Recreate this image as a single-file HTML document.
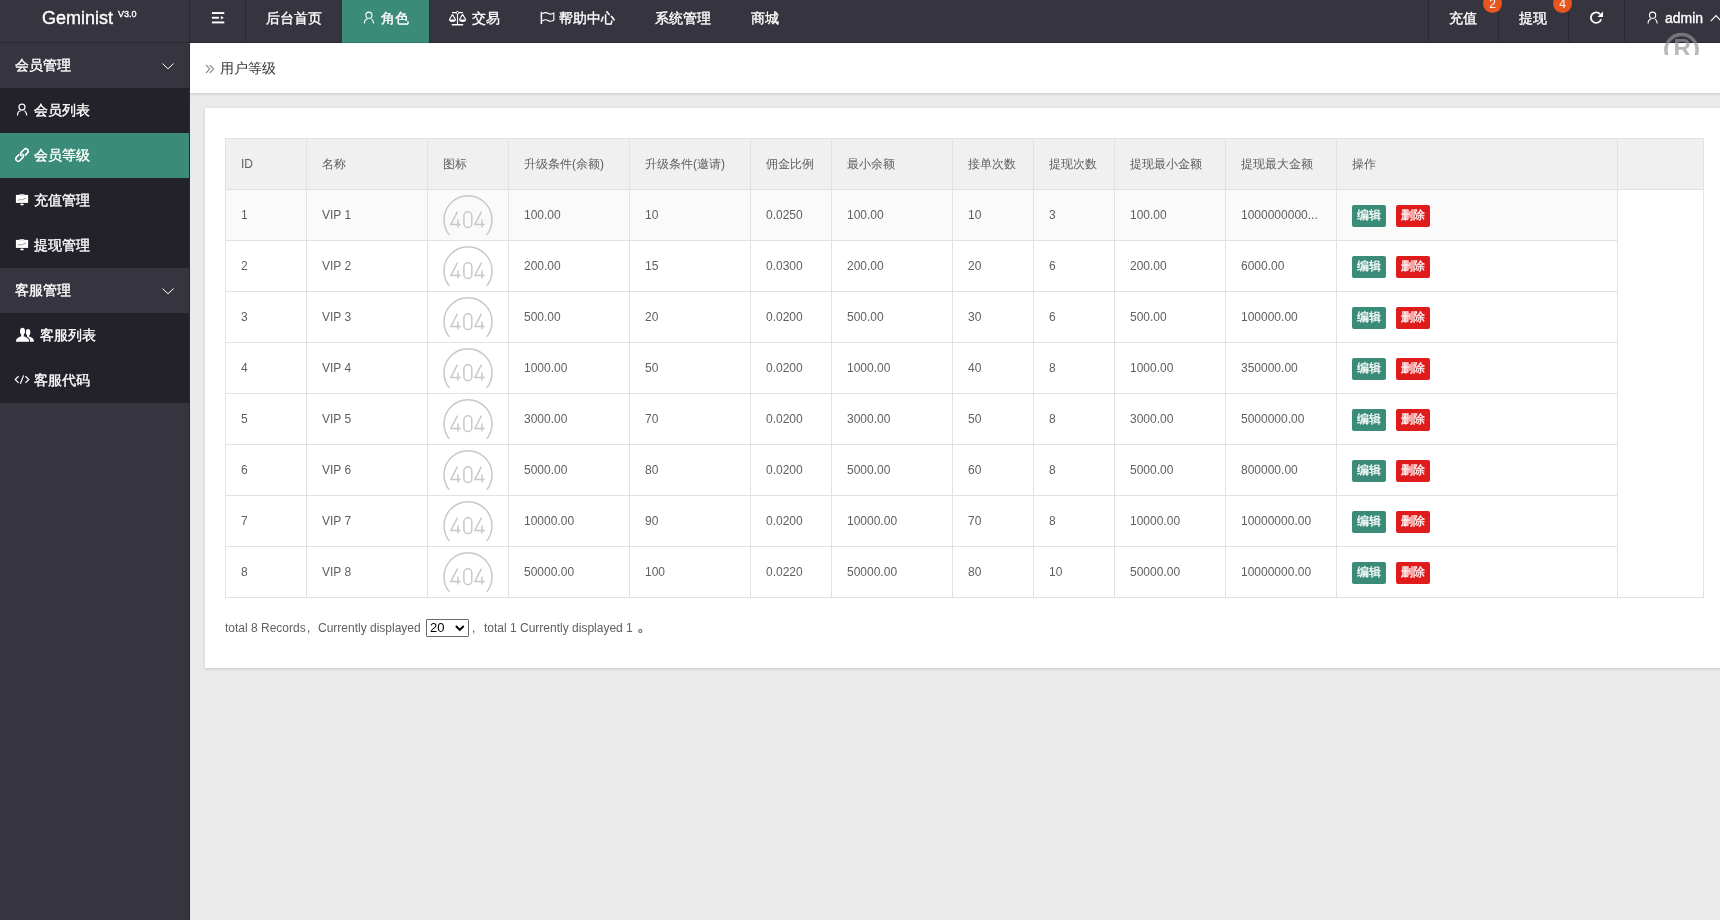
<!DOCTYPE html>
<html><head><meta charset="utf-8">
<style>
*{margin:0;padding:0;box-sizing:border-box}
html,body{width:1720px;height:920px;overflow:hidden;background:#eaeaea;font-family:"Liberation Sans",sans-serif;position:relative}
.t{position:absolute;white-space:nowrap}
body>div,body>svg{will-change:transform}
.r{position:absolute}
svg{position:absolute;overflow:visible}
</style></head><body>

<div class="r" style="left:190px;top:43px;width:1530px;height:50px;background:#fff;box-shadow:0 1px 3px rgba(0,0,0,.16)"></div>
<div class="r" style="left:205px;top:108px;width:1530px;height:560px;background:#fff;box-shadow:0 1px 3px rgba(0,0,0,.14)"></div>
<svg style="left:203px;top:62px" width="14" height="14" viewBox="203 62 14 14"><path d="M206 65.2 L209.8 69 L206 72.9 M209.8 65.2 L213.6 69 L209.8 72.9" fill="none" stroke="#7a7a7a" stroke-width="1.05"/></svg>
<div class="t" style="left:220px;top:60px;font-size:14px;line-height:16px;color:#333;">用户等级</div>
<div class="r" style="left:225px;top:138px;width:1479px;height:51px;background:#f0f0f0;"></div>
<div class="r" style="left:226px;top:190px;width:1391px;height:50px;background:#fafafa;"></div>
<div class="r" style="left:225px;top:138px;width:1479px;height:1px;background:#e2e2e2;"></div>
<div class="r" style="left:225px;top:189px;width:1479px;height:1px;background:#e2e2e2;"></div>
<div class="r" style="left:225px;top:240px;width:1393px;height:1px;background:#e2e2e2;"></div>
<div class="r" style="left:225px;top:291px;width:1393px;height:1px;background:#e2e2e2;"></div>
<div class="r" style="left:225px;top:342px;width:1393px;height:1px;background:#e2e2e2;"></div>
<div class="r" style="left:225px;top:393px;width:1393px;height:1px;background:#e2e2e2;"></div>
<div class="r" style="left:225px;top:444px;width:1393px;height:1px;background:#e2e2e2;"></div>
<div class="r" style="left:225px;top:495px;width:1393px;height:1px;background:#e2e2e2;"></div>
<div class="r" style="left:225px;top:546px;width:1393px;height:1px;background:#e2e2e2;"></div>
<div class="r" style="left:225px;top:597px;width:1393px;height:1px;background:#e2e2e2;"></div>
<div class="r" style="left:1617px;top:597px;width:87px;height:1px;background:#e2e2e2;"></div>
<div class="r" style="left:225px;top:138px;width:1px;height:460px;background:#e2e2e2;"></div>
<div class="r" style="left:306px;top:138px;width:1px;height:460px;background:#e2e2e2;"></div>
<div class="r" style="left:427px;top:138px;width:1px;height:460px;background:#e2e2e2;"></div>
<div class="r" style="left:508px;top:138px;width:1px;height:460px;background:#e2e2e2;"></div>
<div class="r" style="left:629px;top:138px;width:1px;height:460px;background:#e2e2e2;"></div>
<div class="r" style="left:750px;top:138px;width:1px;height:460px;background:#e2e2e2;"></div>
<div class="r" style="left:831px;top:138px;width:1px;height:460px;background:#e2e2e2;"></div>
<div class="r" style="left:952px;top:138px;width:1px;height:460px;background:#e2e2e2;"></div>
<div class="r" style="left:1033px;top:138px;width:1px;height:460px;background:#e2e2e2;"></div>
<div class="r" style="left:1114px;top:138px;width:1px;height:460px;background:#e2e2e2;"></div>
<div class="r" style="left:1225px;top:138px;width:1px;height:460px;background:#e2e2e2;"></div>
<div class="r" style="left:1336px;top:138px;width:1px;height:460px;background:#e2e2e2;"></div>
<div class="r" style="left:1617px;top:138px;width:1px;height:460px;background:#e2e2e2;"></div>
<div class="r" style="left:1703px;top:138px;width:1px;height:460px;background:#e2e2e2;"></div>
<div class="t" style="left:241px;top:157px;font-size:12px;line-height:14px;color:#606060;">ID</div>
<div class="t" style="left:322px;top:157px;font-size:12px;line-height:14px;color:#606060;">名称</div>
<div class="t" style="left:443px;top:157px;font-size:12px;line-height:14px;color:#606060;">图标</div>
<div class="t" style="left:524px;top:157px;font-size:12px;line-height:14px;color:#606060;">升级条件(余额)</div>
<div class="t" style="left:645px;top:157px;font-size:12px;line-height:14px;color:#606060;">升级条件(邀请)</div>
<div class="t" style="left:766px;top:157px;font-size:12px;line-height:14px;color:#606060;">佣金比例</div>
<div class="t" style="left:847px;top:157px;font-size:12px;line-height:14px;color:#606060;">最小余额</div>
<div class="t" style="left:968px;top:157px;font-size:12px;line-height:14px;color:#606060;">接单次数</div>
<div class="t" style="left:1049px;top:157px;font-size:12px;line-height:14px;color:#606060;">提现次数</div>
<div class="t" style="left:1130px;top:157px;font-size:12px;line-height:14px;color:#606060;">提现最小金额</div>
<div class="t" style="left:1241px;top:157px;font-size:12px;line-height:14px;color:#606060;">提现最大金额</div>
<div class="t" style="left:1352px;top:157px;font-size:12px;line-height:14px;color:#606060;">操作</div>
<div class="t" style="left:241px;top:208px;font-size:12px;line-height:14px;color:#606060;">1</div>
<div class="t" style="left:322px;top:208px;font-size:12px;line-height:14px;color:#606060;">VIP 1</div>
<svg style="left:428px;top:190px" width="80" height="50" viewBox="0 0 80 50">
<defs><clipPath id="c0"><rect x="0" y="0" width="80" height="44.7"/></clipPath></defs>
<g fill="none" stroke="#ccc7c7" stroke-width="1.5">
<circle cx="40" cy="29.8" r="24" clip-path="url(#c0)"/>
<path d="M29.5 21.6 L22.9 34.5 L32.8 34.5 M30 29.4 L30 37.6"/>
<rect x="35.9" y="21.8" width="7.9" height="15.8" rx="3.95"/>
<path d="M53.5 21.6 L46.9 34.5 L56.8 34.5 M54 29.4 L54 37.6"/>
</g></svg>
<div class="t" style="left:524px;top:208px;font-size:12px;line-height:14px;color:#606060;">100.00</div>
<div class="t" style="left:645px;top:208px;font-size:12px;line-height:14px;color:#606060;">10</div>
<div class="t" style="left:766px;top:208px;font-size:12px;line-height:14px;color:#606060;">0.0250</div>
<div class="t" style="left:847px;top:208px;font-size:12px;line-height:14px;color:#606060;">100.00</div>
<div class="t" style="left:968px;top:208px;font-size:12px;line-height:14px;color:#606060;">10</div>
<div class="t" style="left:1049px;top:208px;font-size:12px;line-height:14px;color:#606060;">3</div>
<div class="t" style="left:1130px;top:208px;font-size:12px;line-height:14px;color:#606060;">100.00</div>
<div class="t" style="left:1241px;top:208px;font-size:12px;line-height:14px;color:#606060;">1000000000...</div>
<div class="t" style="left:1352px;top:205px;width:34px;height:22px;background:#3a8b78;border-radius:2px;color:#fff;font-size:12px;line-height:20px;text-align:center;-webkit-text-stroke:0.3px #fff">编辑</div>
<div class="t" style="left:1396px;top:205px;width:34px;height:22px;background:#e01b1b;border-radius:2px;color:#fff;font-size:12px;line-height:20px;text-align:center;-webkit-text-stroke:0.3px #fff">删除</div>
<div class="t" style="left:241px;top:259px;font-size:12px;line-height:14px;color:#606060;">2</div>
<div class="t" style="left:322px;top:259px;font-size:12px;line-height:14px;color:#606060;">VIP 2</div>
<svg style="left:428px;top:241px" width="80" height="50" viewBox="0 0 80 50">
<defs><clipPath id="c1"><rect x="0" y="0" width="80" height="44.7"/></clipPath></defs>
<g fill="none" stroke="#ccc7c7" stroke-width="1.5">
<circle cx="40" cy="29.8" r="24" clip-path="url(#c1)"/>
<path d="M29.5 21.6 L22.9 34.5 L32.8 34.5 M30 29.4 L30 37.6"/>
<rect x="35.9" y="21.8" width="7.9" height="15.8" rx="3.95"/>
<path d="M53.5 21.6 L46.9 34.5 L56.8 34.5 M54 29.4 L54 37.6"/>
</g></svg>
<div class="t" style="left:524px;top:259px;font-size:12px;line-height:14px;color:#606060;">200.00</div>
<div class="t" style="left:645px;top:259px;font-size:12px;line-height:14px;color:#606060;">15</div>
<div class="t" style="left:766px;top:259px;font-size:12px;line-height:14px;color:#606060;">0.0300</div>
<div class="t" style="left:847px;top:259px;font-size:12px;line-height:14px;color:#606060;">200.00</div>
<div class="t" style="left:968px;top:259px;font-size:12px;line-height:14px;color:#606060;">20</div>
<div class="t" style="left:1049px;top:259px;font-size:12px;line-height:14px;color:#606060;">6</div>
<div class="t" style="left:1130px;top:259px;font-size:12px;line-height:14px;color:#606060;">200.00</div>
<div class="t" style="left:1241px;top:259px;font-size:12px;line-height:14px;color:#606060;">6000.00</div>
<div class="t" style="left:1352px;top:256px;width:34px;height:22px;background:#3a8b78;border-radius:2px;color:#fff;font-size:12px;line-height:20px;text-align:center;-webkit-text-stroke:0.3px #fff">编辑</div>
<div class="t" style="left:1396px;top:256px;width:34px;height:22px;background:#e01b1b;border-radius:2px;color:#fff;font-size:12px;line-height:20px;text-align:center;-webkit-text-stroke:0.3px #fff">删除</div>
<div class="t" style="left:241px;top:310px;font-size:12px;line-height:14px;color:#606060;">3</div>
<div class="t" style="left:322px;top:310px;font-size:12px;line-height:14px;color:#606060;">VIP 3</div>
<svg style="left:428px;top:292px" width="80" height="50" viewBox="0 0 80 50">
<defs><clipPath id="c2"><rect x="0" y="0" width="80" height="44.7"/></clipPath></defs>
<g fill="none" stroke="#ccc7c7" stroke-width="1.5">
<circle cx="40" cy="29.8" r="24" clip-path="url(#c2)"/>
<path d="M29.5 21.6 L22.9 34.5 L32.8 34.5 M30 29.4 L30 37.6"/>
<rect x="35.9" y="21.8" width="7.9" height="15.8" rx="3.95"/>
<path d="M53.5 21.6 L46.9 34.5 L56.8 34.5 M54 29.4 L54 37.6"/>
</g></svg>
<div class="t" style="left:524px;top:310px;font-size:12px;line-height:14px;color:#606060;">500.00</div>
<div class="t" style="left:645px;top:310px;font-size:12px;line-height:14px;color:#606060;">20</div>
<div class="t" style="left:766px;top:310px;font-size:12px;line-height:14px;color:#606060;">0.0200</div>
<div class="t" style="left:847px;top:310px;font-size:12px;line-height:14px;color:#606060;">500.00</div>
<div class="t" style="left:968px;top:310px;font-size:12px;line-height:14px;color:#606060;">30</div>
<div class="t" style="left:1049px;top:310px;font-size:12px;line-height:14px;color:#606060;">6</div>
<div class="t" style="left:1130px;top:310px;font-size:12px;line-height:14px;color:#606060;">500.00</div>
<div class="t" style="left:1241px;top:310px;font-size:12px;line-height:14px;color:#606060;">100000.00</div>
<div class="t" style="left:1352px;top:307px;width:34px;height:22px;background:#3a8b78;border-radius:2px;color:#fff;font-size:12px;line-height:20px;text-align:center;-webkit-text-stroke:0.3px #fff">编辑</div>
<div class="t" style="left:1396px;top:307px;width:34px;height:22px;background:#e01b1b;border-radius:2px;color:#fff;font-size:12px;line-height:20px;text-align:center;-webkit-text-stroke:0.3px #fff">删除</div>
<div class="t" style="left:241px;top:361px;font-size:12px;line-height:14px;color:#606060;">4</div>
<div class="t" style="left:322px;top:361px;font-size:12px;line-height:14px;color:#606060;">VIP 4</div>
<svg style="left:428px;top:343px" width="80" height="50" viewBox="0 0 80 50">
<defs><clipPath id="c3"><rect x="0" y="0" width="80" height="44.7"/></clipPath></defs>
<g fill="none" stroke="#ccc7c7" stroke-width="1.5">
<circle cx="40" cy="29.8" r="24" clip-path="url(#c3)"/>
<path d="M29.5 21.6 L22.9 34.5 L32.8 34.5 M30 29.4 L30 37.6"/>
<rect x="35.9" y="21.8" width="7.9" height="15.8" rx="3.95"/>
<path d="M53.5 21.6 L46.9 34.5 L56.8 34.5 M54 29.4 L54 37.6"/>
</g></svg>
<div class="t" style="left:524px;top:361px;font-size:12px;line-height:14px;color:#606060;">1000.00</div>
<div class="t" style="left:645px;top:361px;font-size:12px;line-height:14px;color:#606060;">50</div>
<div class="t" style="left:766px;top:361px;font-size:12px;line-height:14px;color:#606060;">0.0200</div>
<div class="t" style="left:847px;top:361px;font-size:12px;line-height:14px;color:#606060;">1000.00</div>
<div class="t" style="left:968px;top:361px;font-size:12px;line-height:14px;color:#606060;">40</div>
<div class="t" style="left:1049px;top:361px;font-size:12px;line-height:14px;color:#606060;">8</div>
<div class="t" style="left:1130px;top:361px;font-size:12px;line-height:14px;color:#606060;">1000.00</div>
<div class="t" style="left:1241px;top:361px;font-size:12px;line-height:14px;color:#606060;">350000.00</div>
<div class="t" style="left:1352px;top:358px;width:34px;height:22px;background:#3a8b78;border-radius:2px;color:#fff;font-size:12px;line-height:20px;text-align:center;-webkit-text-stroke:0.3px #fff">编辑</div>
<div class="t" style="left:1396px;top:358px;width:34px;height:22px;background:#e01b1b;border-radius:2px;color:#fff;font-size:12px;line-height:20px;text-align:center;-webkit-text-stroke:0.3px #fff">删除</div>
<div class="t" style="left:241px;top:412px;font-size:12px;line-height:14px;color:#606060;">5</div>
<div class="t" style="left:322px;top:412px;font-size:12px;line-height:14px;color:#606060;">VIP 5</div>
<svg style="left:428px;top:394px" width="80" height="50" viewBox="0 0 80 50">
<defs><clipPath id="c4"><rect x="0" y="0" width="80" height="44.7"/></clipPath></defs>
<g fill="none" stroke="#ccc7c7" stroke-width="1.5">
<circle cx="40" cy="29.8" r="24" clip-path="url(#c4)"/>
<path d="M29.5 21.6 L22.9 34.5 L32.8 34.5 M30 29.4 L30 37.6"/>
<rect x="35.9" y="21.8" width="7.9" height="15.8" rx="3.95"/>
<path d="M53.5 21.6 L46.9 34.5 L56.8 34.5 M54 29.4 L54 37.6"/>
</g></svg>
<div class="t" style="left:524px;top:412px;font-size:12px;line-height:14px;color:#606060;">3000.00</div>
<div class="t" style="left:645px;top:412px;font-size:12px;line-height:14px;color:#606060;">70</div>
<div class="t" style="left:766px;top:412px;font-size:12px;line-height:14px;color:#606060;">0.0200</div>
<div class="t" style="left:847px;top:412px;font-size:12px;line-height:14px;color:#606060;">3000.00</div>
<div class="t" style="left:968px;top:412px;font-size:12px;line-height:14px;color:#606060;">50</div>
<div class="t" style="left:1049px;top:412px;font-size:12px;line-height:14px;color:#606060;">8</div>
<div class="t" style="left:1130px;top:412px;font-size:12px;line-height:14px;color:#606060;">3000.00</div>
<div class="t" style="left:1241px;top:412px;font-size:12px;line-height:14px;color:#606060;">5000000.00</div>
<div class="t" style="left:1352px;top:409px;width:34px;height:22px;background:#3a8b78;border-radius:2px;color:#fff;font-size:12px;line-height:20px;text-align:center;-webkit-text-stroke:0.3px #fff">编辑</div>
<div class="t" style="left:1396px;top:409px;width:34px;height:22px;background:#e01b1b;border-radius:2px;color:#fff;font-size:12px;line-height:20px;text-align:center;-webkit-text-stroke:0.3px #fff">删除</div>
<div class="t" style="left:241px;top:463px;font-size:12px;line-height:14px;color:#606060;">6</div>
<div class="t" style="left:322px;top:463px;font-size:12px;line-height:14px;color:#606060;">VIP 6</div>
<svg style="left:428px;top:445px" width="80" height="50" viewBox="0 0 80 50">
<defs><clipPath id="c5"><rect x="0" y="0" width="80" height="44.7"/></clipPath></defs>
<g fill="none" stroke="#ccc7c7" stroke-width="1.5">
<circle cx="40" cy="29.8" r="24" clip-path="url(#c5)"/>
<path d="M29.5 21.6 L22.9 34.5 L32.8 34.5 M30 29.4 L30 37.6"/>
<rect x="35.9" y="21.8" width="7.9" height="15.8" rx="3.95"/>
<path d="M53.5 21.6 L46.9 34.5 L56.8 34.5 M54 29.4 L54 37.6"/>
</g></svg>
<div class="t" style="left:524px;top:463px;font-size:12px;line-height:14px;color:#606060;">5000.00</div>
<div class="t" style="left:645px;top:463px;font-size:12px;line-height:14px;color:#606060;">80</div>
<div class="t" style="left:766px;top:463px;font-size:12px;line-height:14px;color:#606060;">0.0200</div>
<div class="t" style="left:847px;top:463px;font-size:12px;line-height:14px;color:#606060;">5000.00</div>
<div class="t" style="left:968px;top:463px;font-size:12px;line-height:14px;color:#606060;">60</div>
<div class="t" style="left:1049px;top:463px;font-size:12px;line-height:14px;color:#606060;">8</div>
<div class="t" style="left:1130px;top:463px;font-size:12px;line-height:14px;color:#606060;">5000.00</div>
<div class="t" style="left:1241px;top:463px;font-size:12px;line-height:14px;color:#606060;">800000.00</div>
<div class="t" style="left:1352px;top:460px;width:34px;height:22px;background:#3a8b78;border-radius:2px;color:#fff;font-size:12px;line-height:20px;text-align:center;-webkit-text-stroke:0.3px #fff">编辑</div>
<div class="t" style="left:1396px;top:460px;width:34px;height:22px;background:#e01b1b;border-radius:2px;color:#fff;font-size:12px;line-height:20px;text-align:center;-webkit-text-stroke:0.3px #fff">删除</div>
<div class="t" style="left:241px;top:514px;font-size:12px;line-height:14px;color:#606060;">7</div>
<div class="t" style="left:322px;top:514px;font-size:12px;line-height:14px;color:#606060;">VIP 7</div>
<svg style="left:428px;top:496px" width="80" height="50" viewBox="0 0 80 50">
<defs><clipPath id="c6"><rect x="0" y="0" width="80" height="44.7"/></clipPath></defs>
<g fill="none" stroke="#ccc7c7" stroke-width="1.5">
<circle cx="40" cy="29.8" r="24" clip-path="url(#c6)"/>
<path d="M29.5 21.6 L22.9 34.5 L32.8 34.5 M30 29.4 L30 37.6"/>
<rect x="35.9" y="21.8" width="7.9" height="15.8" rx="3.95"/>
<path d="M53.5 21.6 L46.9 34.5 L56.8 34.5 M54 29.4 L54 37.6"/>
</g></svg>
<div class="t" style="left:524px;top:514px;font-size:12px;line-height:14px;color:#606060;">10000.00</div>
<div class="t" style="left:645px;top:514px;font-size:12px;line-height:14px;color:#606060;">90</div>
<div class="t" style="left:766px;top:514px;font-size:12px;line-height:14px;color:#606060;">0.0200</div>
<div class="t" style="left:847px;top:514px;font-size:12px;line-height:14px;color:#606060;">10000.00</div>
<div class="t" style="left:968px;top:514px;font-size:12px;line-height:14px;color:#606060;">70</div>
<div class="t" style="left:1049px;top:514px;font-size:12px;line-height:14px;color:#606060;">8</div>
<div class="t" style="left:1130px;top:514px;font-size:12px;line-height:14px;color:#606060;">10000.00</div>
<div class="t" style="left:1241px;top:514px;font-size:12px;line-height:14px;color:#606060;">10000000.00</div>
<div class="t" style="left:1352px;top:511px;width:34px;height:22px;background:#3a8b78;border-radius:2px;color:#fff;font-size:12px;line-height:20px;text-align:center;-webkit-text-stroke:0.3px #fff">编辑</div>
<div class="t" style="left:1396px;top:511px;width:34px;height:22px;background:#e01b1b;border-radius:2px;color:#fff;font-size:12px;line-height:20px;text-align:center;-webkit-text-stroke:0.3px #fff">删除</div>
<div class="t" style="left:241px;top:565px;font-size:12px;line-height:14px;color:#606060;">8</div>
<div class="t" style="left:322px;top:565px;font-size:12px;line-height:14px;color:#606060;">VIP 8</div>
<svg style="left:428px;top:547px" width="80" height="50" viewBox="0 0 80 50">
<defs><clipPath id="c7"><rect x="0" y="0" width="80" height="44.7"/></clipPath></defs>
<g fill="none" stroke="#ccc7c7" stroke-width="1.5">
<circle cx="40" cy="29.8" r="24" clip-path="url(#c7)"/>
<path d="M29.5 21.6 L22.9 34.5 L32.8 34.5 M30 29.4 L30 37.6"/>
<rect x="35.9" y="21.8" width="7.9" height="15.8" rx="3.95"/>
<path d="M53.5 21.6 L46.9 34.5 L56.8 34.5 M54 29.4 L54 37.6"/>
</g></svg>
<div class="t" style="left:524px;top:565px;font-size:12px;line-height:14px;color:#606060;">50000.00</div>
<div class="t" style="left:645px;top:565px;font-size:12px;line-height:14px;color:#606060;">100</div>
<div class="t" style="left:766px;top:565px;font-size:12px;line-height:14px;color:#606060;">0.0220</div>
<div class="t" style="left:847px;top:565px;font-size:12px;line-height:14px;color:#606060;">50000.00</div>
<div class="t" style="left:968px;top:565px;font-size:12px;line-height:14px;color:#606060;">80</div>
<div class="t" style="left:1049px;top:565px;font-size:12px;line-height:14px;color:#606060;">10</div>
<div class="t" style="left:1130px;top:565px;font-size:12px;line-height:14px;color:#606060;">50000.00</div>
<div class="t" style="left:1241px;top:565px;font-size:12px;line-height:14px;color:#606060;">10000000.00</div>
<div class="t" style="left:1352px;top:562px;width:34px;height:22px;background:#3a8b78;border-radius:2px;color:#fff;font-size:12px;line-height:20px;text-align:center;-webkit-text-stroke:0.3px #fff">编辑</div>
<div class="t" style="left:1396px;top:562px;width:34px;height:22px;background:#e01b1b;border-radius:2px;color:#fff;font-size:12px;line-height:20px;text-align:center;-webkit-text-stroke:0.3px #fff">删除</div>
<div class="t" style="left:225px;top:621px;font-size:12px;line-height:14px;color:#606060;">total 8 Records</div>
<div class="t" style="left:307px;top:621px;font-size:12px;line-height:14px;color:#606060;">,</div>
<div class="t" style="left:318px;top:621px;font-size:12px;line-height:14px;color:#606060;">Currently displayed</div>
<div class="r" style="left:426px;top:619px;width:43px;height:18px;border:1px solid #6b6b6b;border-radius:1px;background:#fff"></div>
<div class="t" style="left:430px;top:620px;font-size:13px;line-height:15px;color:#000;">20</div>
<svg style="left:453px;top:623px" width="12" height="10" viewBox="453 623 12 10"><path d="M455.9 626 L459.8 630 L463.7 626" fill="none" stroke="#000" stroke-width="1.9"/></svg>
<div class="t" style="left:472px;top:621px;font-size:12px;line-height:14px;color:#606060;">,</div>
<div class="t" style="left:484px;top:621px;font-size:12px;line-height:14px;color:#606060;">total 1 Currently displayed 1</div>
<svg style="left:636px;top:627px" width="8" height="8" viewBox="636 627 8 8"><circle cx="640.3" cy="631" r="1.55" fill="none" stroke="#666" stroke-width="1.1"/></svg>
<div class="r" style="left:0px;top:0px;width:1720px;height:42px;background:#35343f;"></div>
<div class="r" style="left:0px;top:42px;width:1720px;height:1px;background:#282732;"></div>
<div class="t" style="left:42px;top:8px;font-size:18px;line-height:20px;color:#fff;-webkit-text-stroke:0.35px #fff;">Geminist</div>
<div class="t" style="left:118px;top:9px;font-size:9px;line-height:10px;color:#fff;-webkit-text-stroke:0.35px #fff;">V3.0</div>
<div class="r" style="left:189px;top:0px;width:1px;height:42px;background:#282732;"></div>
<div class="r" style="left:245px;top:0px;width:1px;height:42px;background:#282732;"></div>
<div class="r" style="left:1428px;top:0px;width:1px;height:42px;background:#282732;"></div>
<div class="r" style="left:1498px;top:0px;width:1px;height:42px;background:#282732;"></div>
<div class="r" style="left:1568px;top:0px;width:1px;height:42px;background:#282732;"></div>
<div class="r" style="left:1624px;top:0px;width:1px;height:42px;background:#282732;"></div>
<div class="r" style="left:342px;top:0px;width:87px;height:42px;background:#3a8b78;"></div>
<div class="r" style="left:342px;top:42px;width:87px;height:1px;background:#2f7d6b;"></div>
<div class="r" style="left:341px;top:0px;width:1px;height:42px;background:#2e2d38;"></div>
<div class="r" style="left:429px;top:0px;width:1px;height:42px;background:#2e2d38;"></div>
<div class="t" style="left:266px;top:8px;font-size:14px;line-height:20px;color:#fff;-webkit-text-stroke:0.35px #fff;">后台首页</div>
<div class="t" style="left:381px;top:8px;font-size:14px;line-height:20px;color:#fff;-webkit-text-stroke:0.35px #fff;">角色</div>
<div class="t" style="left:472px;top:8px;font-size:14px;line-height:20px;color:#fff;-webkit-text-stroke:0.35px #fff;">交易</div>
<div class="t" style="left:559px;top:8px;font-size:14px;line-height:20px;color:#fff;-webkit-text-stroke:0.35px #fff;">帮助中心</div>
<div class="t" style="left:655px;top:8px;font-size:14px;line-height:20px;color:#fff;-webkit-text-stroke:0.35px #fff;">系统管理</div>
<div class="t" style="left:751px;top:8px;font-size:14px;line-height:20px;color:#fff;-webkit-text-stroke:0.35px #fff;">商城</div>
<div class="t" style="left:1449px;top:8px;font-size:14px;line-height:20px;color:#fff;-webkit-text-stroke:0.35px #fff;">充值</div>
<div class="t" style="left:1519px;top:8px;font-size:14px;line-height:20px;color:#fff;-webkit-text-stroke:0.35px #fff;">提现</div>
<div class="t" style="left:1665px;top:8px;font-size:14px;line-height:20px;color:#fff;-webkit-text-stroke:0.35px #fff;">admin</div>
<div class="r" style="left:0px;top:43px;width:189px;height:877px;background:#35343f;"></div>
<div class="r" style="left:189px;top:43px;width:1px;height:877px;background:#282732;"></div>
<div class="r" style="left:0px;top:43px;width:189px;height:45px;background:#35343f;"></div>
<div class="t" style="left:15px;top:55px;font-size:14px;line-height:20px;color:#fff;-webkit-text-stroke:0.35px #fff;">会员管理</div>
<div class="r" style="left:0px;top:88px;width:189px;height:45px;background:#23222b;"></div>
<div class="t" style="left:34px;top:100px;font-size:14px;line-height:20px;color:#fff;-webkit-text-stroke:0.35px #fff;">会员列表</div>
<div class="r" style="left:0px;top:133px;width:189px;height:45px;background:#3a8b78;"></div>
<div class="t" style="left:34px;top:145px;font-size:14px;line-height:20px;color:#fff;-webkit-text-stroke:0.35px #fff;">会员等级</div>
<div class="r" style="left:0px;top:178px;width:189px;height:45px;background:#23222b;"></div>
<div class="t" style="left:34px;top:190px;font-size:14px;line-height:20px;color:#fff;-webkit-text-stroke:0.35px #fff;">充值管理</div>
<div class="r" style="left:0px;top:223px;width:189px;height:45px;background:#23222b;"></div>
<div class="t" style="left:34px;top:235px;font-size:14px;line-height:20px;color:#fff;-webkit-text-stroke:0.35px #fff;">提现管理</div>
<div class="r" style="left:0px;top:268px;width:189px;height:45px;background:#35343f;"></div>
<div class="t" style="left:15px;top:280px;font-size:14px;line-height:20px;color:#fff;-webkit-text-stroke:0.35px #fff;">客服管理</div>
<div class="r" style="left:0px;top:313px;width:189px;height:45px;background:#23222b;"></div>
<div class="t" style="left:40px;top:325px;font-size:14px;line-height:20px;color:#fff;-webkit-text-stroke:0.35px #fff;">客服列表</div>
<div class="r" style="left:0px;top:358px;width:189px;height:45px;background:#23222b;"></div>
<div class="t" style="left:34px;top:370px;font-size:14px;line-height:20px;color:#fff;-webkit-text-stroke:0.35px #fff;">客服代码</div>
<svg style="left:208px;top:8px" width="20" height="20" viewBox="208 8 20 20"><rect x="211.9" y="12.1" width="12.4" height="1.9" fill="#fff"/><rect x="211.9" y="16.8" width="7.1" height="1.9" fill="#fff"/><path d="M220.9 15.9 L223.9 17.75 L220.9 19.6 Z" fill="#fff"/><rect x="211.9" y="21.5" width="12.4" height="1.9" fill="#fff"/></svg>
<svg style="left:360px;top:8px" width="20" height="20" viewBox="360 8 20 20"><circle cx="368.9" cy="15.2" r="3.1" fill="none" stroke="#fff" stroke-width="1.1"/><path d="M364.4 23.6 C364.4 19.7 366.4 19.2 367.4 19.2" fill="none" stroke="#fff" stroke-width="1.1"/><path d="M373.5 23.6 C373.5 20.7 372.4 19.8 371.5 19.0" fill="none" stroke="#fff" stroke-width="1.1"/></svg>
<svg style="left:1640px;top:8px" width="22" height="20" viewBox="1640 8 22 20"><circle cx="1652.6" cy="15.2" r="3.1" fill="none" stroke="#fff" stroke-width="1.1"/><path d="M1648.1 23.6 C1648.1 19.7 1650.1 19.2 1651.1 19.2" fill="none" stroke="#fff" stroke-width="1.1"/><path d="M1657.2 23.6 C1657.2 20.7 1656.1 19.8 1655.1999999999998 19.0" fill="none" stroke="#fff" stroke-width="1.1"/></svg>
<svg style="left:12px;top:98px" width="20" height="22" viewBox="12 98 20 22"><circle cx="22" cy="107.1" r="3.0" fill="none" stroke="#fff" stroke-width="1.2"/><path d="M17.5 115.6 C17.5 111.5 19.5 111.0 20.5 111.0" fill="none" stroke="#fff" stroke-width="1.2"/><path d="M26.7 115.6 C26.7 112.5 25.5 111.6 24.6 110.8" fill="none" stroke="#fff" stroke-width="1.2"/></svg>
<svg style="left:446px;top:8px" width="24" height="20" viewBox="446 8 24 20"><g stroke="#fff" stroke-width="1.1" fill="none"><path d="M452 12.6 H463 M457.5 12.6 V24.6 M452 24.6 H463"/><path d="M452.4 14.4 L449.3 19.8 M452.4 14.4 L455.6 19.8 M462.6 14.4 L459.4 19.8 M462.6 14.4 L465.8 19.8"/></g><circle cx="457.5" cy="12.7" r="1.3" fill="#35343f" stroke="#fff" stroke-width="0.9"/><path d="M448.9 19.6 H456 A3.55 2.4 0 0 1 448.9 19.6 Z M459.1 19.6 H466.2 A3.55 2.4 0 0 1 459.1 19.6 Z" fill="#fff"/><rect x="451.8" y="24" width="11.4" height="1.3" fill="#fff"/></svg>
<svg style="left:538px;top:8px" width="20" height="20" viewBox="538 8 20 20"><path d="M541.4 11.8 V24.1" stroke="#fff" stroke-width="1.5"/><path d="M542.2 13.9 C544.5 12.3 546.5 12.3 548 13.3 C549.5 14.3 551.5 14.3 553.8 13.1 V20.2 C551.5 21.5 549.5 21.5 548 20.5 C546.5 19.5 544.5 19.5 542.2 21" fill="none" stroke="#fff" stroke-width="1.15"/></svg>
<svg style="left:1586px;top:8px" width="20" height="20" viewBox="1586 8 20 20"><path d="M1600 14.1 A5.25 5.25 0 1 0 1601.1 19.3" fill="none" stroke="#fff" stroke-width="1.8"/><path d="M1603 11.5 V17 H1597.5 Z" fill="#fff"/></svg>
<svg style="left:1706px;top:10px" width="14" height="14" viewBox="1706 10 14 14"><path d="M1710.8 21.2 L1716 15.6 L1721.2 21.2" fill="none" stroke="#fff" stroke-width="1.1"/></svg>
<div class="t" style="left:1483px;top:-6px;width:19px;height:19px;border-radius:50%;background:#e6561e;color:#fff;font-size:12px;line-height:19px;text-align:center;padding-top:4px;line-height:13px">2</div>
<div class="t" style="left:1553px;top:-6px;width:19px;height:19px;border-radius:50%;background:#e6561e;color:#fff;font-size:12px;line-height:19px;text-align:center;padding-top:4px;line-height:13px">4</div>
<svg style="left:158px;top:58px" width="20" height="14" viewBox="158 58 20 14"><path d="M162.5 63.5 L168 68.8 L173.6 63.5" fill="none" stroke="#fff" stroke-width="1.0"/></svg>
<svg style="left:158px;top:283px" width="20" height="14" viewBox="158 283 20 14"><path d="M162.5 288.5 L168 293.8 L173.6 288.5" fill="none" stroke="#fff" stroke-width="1.0"/></svg>
<svg style="left:12px;top:145px" width="20" height="20" viewBox="12 145 20 20"><g transform="translate(22 155) rotate(-45) scale(0.86) translate(-22 -155)" fill="none" stroke="#fff" stroke-width="1.85" stroke-linecap="round"><path d="M19.4 152.2 H15.8 A2.8 2.8 0 0 0 15.8 157.8 H20.4 A2.8 2.8 0 0 0 23.2 155"/><path d="M24.6 157.8 H28.2 A2.8 2.8 0 0 0 28.2 152.2 H23.6 A2.8 2.8 0 0 0 20.8 155"/></g></svg>
<svg style="left:12px;top:190px" width="20" height="20" viewBox="12 190 20 20"><rect x="15.9" y="194.9" width="12.2" height="8" fill="#fff"/><rect x="19.4" y="194" width="5" height="1.6" rx="0.6" fill="#ccc"/><path d="M18 200.5 L20 199.5 L22 200 L24 198.8 L26 198.2" fill="none" stroke="#555" stroke-width="0.6"/><rect x="21.5" y="202.9" width="1" height="1.2" fill="#bbb"/><ellipse cx="22" cy="204.6" rx="2" ry="0.8" fill="#fff"/></svg>
<svg style="left:12px;top:235px" width="20" height="20" viewBox="12 235 20 20"><rect x="15.9" y="239.9" width="12.2" height="8" fill="#fff"/><rect x="19.4" y="239" width="5" height="1.6" rx="0.6" fill="#ccc"/><path d="M18 245.5 L20 244.5 L22 245 L24 243.8 L26 243.2" fill="none" stroke="#555" stroke-width="0.6"/><rect x="21.5" y="247.9" width="1" height="1.2" fill="#bbb"/><ellipse cx="22" cy="249.6" rx="2" ry="0.8" fill="#fff"/></svg>
<svg style="left:14px;top:325px" width="22" height="20" viewBox="14 325 22 20"><g fill="#fff"><ellipse cx="22.5" cy="331.3" rx="2.5" ry="3.5"/><rect x="21.2" y="332.5" width="2.6" height="4.5"/><path d="M15.9 341.7 C15.9 338.3 18.2 337.2 20.8 336.4 L24.2 336.4 C26.8 337.2 29.3 338.3 29.3 341.7 Z"/><ellipse cx="28.1" cy="332.2" rx="2.2" ry="3.3"/><rect x="27" y="333.5" width="2.2" height="3.5"/><path d="M30 341.7 H33.9 C33.9 338.6 32.2 337.4 29.9 336.7 L27.3 336.7 C28.5 337.6 30 338.8 30 341.7 Z"/></g><path d="M26.3 336.6 C28.6 337.6 29.7 339.3 29.7 341.8" stroke="#23222b" stroke-width="0.55" fill="none"/><path d="M25.6 331 C25.4 333 25.6 335 26.4 336.6" stroke="#23222b" stroke-width="0.5" fill="none"/></svg>
<svg style="left:12px;top:372px" width="20" height="16" viewBox="12 372 20 16"><g fill="none" stroke="#fff" stroke-width="1.2"><path d="M18.6 376.2 L15.2 379.5 L18.6 382.9 M25.4 376.2 L28.8 379.5 L25.4 382.9"/><path d="M23.6 375.4 L20.4 383.7"/></g></svg>
<svg style="left:1660px;top:30px" width="44" height="30" viewBox="1660 30 44 30"><defs><clipPath id="wm"><rect x="1660" y="30" width="44" height="25"/></clipPath></defs><g clip-path="url(#wm)" opacity="0.67"><circle cx="1681.5" cy="50" r="15.6" fill="none" stroke="#959595" stroke-width="3.5"/><text x="1673.6" y="55.8" font-family="Liberation Sans" font-weight="bold" font-size="24" fill="#959595">R</text></g></svg>
</body></html>
